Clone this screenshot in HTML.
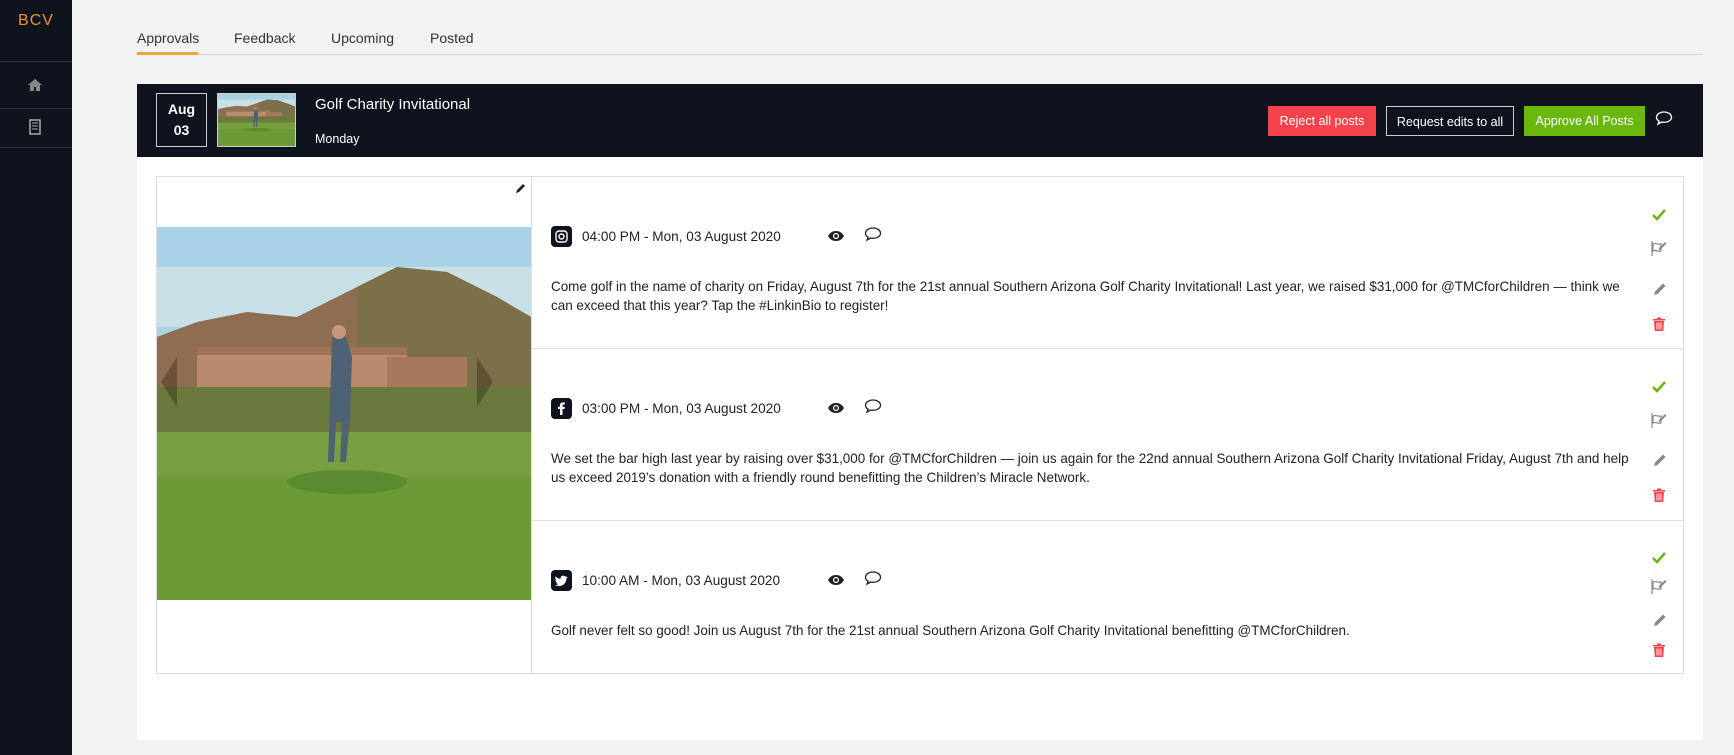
<!DOCTYPE html>
<html><head><meta charset="utf-8"><style>
*{margin:0;padding:0;box-sizing:border-box}
body{width:1734px;height:755px;background:#f2f2f2;font-family:"Liberation Sans",Arial,sans-serif;position:relative;overflow:hidden;color:#222}
.abs{position:absolute}
.side{left:0;top:0;width:72px;height:755px;background:#0f131d}
.side .logo{left:0;width:72px;top:12px;text-align:center;color:#e8932f;font-size:16px;letter-spacing:1px}
.side .ln{left:0;width:72px;height:1px;background:#2a2f3a}
.tab{top:30px;font-size:14px;color:#333}
.panel{left:137px;top:84px;width:1566px;height:656px;background:#fff}
.hdr{left:137px;top:84px;width:1566px;height:73px;background:#0f131d}
.btn{top:106px;height:30px;font-size:12.5px;color:#fff;text-align:center;line-height:30px}
.card{left:156px;top:176px;width:1528px;height:498px;border:1px solid #ddd;background:#fff}
.txt{font-size:13.45px;line-height:19px;color:#222;white-space:nowrap;left:551px}
.time{font-size:13.6px;left:582px;color:#222}
.si{left:551px;width:21px;height:21px;border-radius:4px;background:#0f131d}
.sep{left:531px;width:1153px;height:1px;background:#ddd}
</style></head><body>
<div class="abs side">
<div class="abs logo">BCV</div>
<div class="abs ln" style="top:61px"></div>
<div class="abs ln" style="top:108px"></div>
<div class="abs ln" style="top:147px"></div>
<svg class="abs" style="left:27px;top:78px" width="16" height="14" viewBox="0 0 16 14"><path d="M8 1L1 7h2v6h4V9h2v4h4V7h2z" fill="#888"/></svg>
<svg class="abs" style="left:29px;top:119px" width="12" height="16" viewBox="0 0 12 16"><rect x="1" y="1" width="10" height="14" fill="none" stroke="#aaa" stroke-width="1.5"/><path d="M3 4h6M3 7h6M3 10h6" stroke="#aaa"/></svg>
</div>
<div class="abs tab" style="left:137px">Approvals</div>
<div class="abs tab" style="left:234px">Feedback</div>
<div class="abs tab" style="left:331px">Upcoming</div>
<div class="abs tab" style="left:430px">Posted</div>
<div class="abs" style="left:137px;top:54px;width:1566px;height:1px;background:#d5d5d5"></div>
<div class="abs" style="left:137px;top:52px;width:61px;height:3px;background:#e8a93a"></div>
<div class="abs panel"></div>
<div class="abs hdr"></div>
<div class="abs" style="left:156px;top:93px;width:51px;height:54px;border:1px solid #ccc;color:#fff;font-weight:bold;font-size:14px;text-align:center;line-height:21px;padding-top:5px">Aug<br>03</div>
<svg class="abs" style="left:217px;top:93px;border:1px solid #ccc" width="79" height="54" viewBox="0 0 374 373" preserveAspectRatio="none"><use href="#photo"/></svg>
<div class="abs" style="left:315px;top:96px;color:#fff;font-size:15px">Golf Charity Invitational</div>
<div class="abs" style="left:315px;top:132px;color:#fff;font-size:12.5px">Monday</div>
<div class="abs btn" style="left:1268px;width:108px;background:#f5424b">Reject all posts</div>
<div class="abs btn" style="left:1386px;width:128px;border:1px solid #ccc">Request edits to all</div>
<div class="abs btn" style="left:1524px;width:121px;background:#6ab80e">Approve All Posts</div>
<svg class="abs" style="left:1655px;top:110px" width="18" height="16" viewBox="0 0 18 16"><path d="M9 2C4.6 2 1.5 4.5 1.5 7.3c0 1.6 1 3 2.6 3.9L3 14l3.6-2c.8.2 1.6.3 2.4.3 4.4 0 7.5-2.4 7.5-5.1S13.4 2 9 2z" fill="none" stroke="#fff" stroke-width="1.3"/></svg>
<div class="abs card"></div>
<div class="abs" style="left:531px;top:176px;width:1px;height:498px;background:#ddd"></div>
<svg class="abs" style="left:514px;top:182px" width="13" height="13" viewBox="0 0 13 13"><path d="M2 11l1-3 6-6 2 2-6 6z" fill="#222"/></svg>

<svg class="abs" style="left:157px;top:227px" width="374" height="373" viewBox="0 0 374 373">
<defs>
<g id="photo">
<rect width="374" height="373" fill="#a9d2e6"/>
<rect y="40" width="374" height="60" fill="#c9dfe6"/>
<path d="M0 110 L40 95 L90 85 L140 90 L200 60 L240 40 L290 45 L340 70 L374 90 L374 200 L0 200z" fill="#8f6d50"/>
<path d="M200 60 L240 40 L290 45 L340 70 L374 90 L374 160 L200 160z" fill="#7c7048"/>
<rect x="40" y="120" width="210" height="60" fill="#b98a6c"/>
<rect x="40" y="120" width="210" height="8" fill="#9e7458"/>
<rect x="230" y="130" width="80" height="50" fill="#a8785a"/>
<rect x="0" y="160" width="374" height="50" fill="#6b7a3c"/>
<rect x="0" y="205" width="374" height="168" fill="#76a040"/>
<rect x="0" y="250" width="374" height="123" fill="#6c9a36"/>
<ellipse cx="190" cy="255" rx="60" ry="12" fill="#5c8a2e"/>
<path d="M175 110 l14 0 6 20 -2 60 -4 45 -6 0 2-40 -6 0 -2 40 -6 0 2-60z" fill="#4e6275"/>
<circle cx="182" cy="105" r="7" fill="#c79777"/>
</g>
</defs>
<use href="#photo"/>
<path d="M20 130 l-16 25 16 25z M320 130 l16 25 -16 25z" fill="rgba(0,0,0,0.25)"/>
</svg>

<div class="abs sep" style="top:348px"></div>
<div class="abs sep" style="top:520px"></div>

<div class="abs si" style="top:226px"><svg width="21" height="21" viewBox="0 0 21 21"><rect x="5" y="5" width="11" height="11" rx="3" fill="none" stroke="#fff" stroke-width="1.4"/><circle cx="10.5" cy="10.5" r="2.5" fill="none" stroke="#fff" stroke-width="1.4"/></svg></div>
<div class="abs time" style="top:229px">04:00 PM - Mon, 03 August 2020</div>
<div class="abs txt" style="top:277px">Come golf in the name of charity on Friday, August 7th for the 21st annual Southern Arizona Golf Charity Invitational! Last year, we raised $31,000 for @TMCforChildren — think we<br>can exceed that this year? Tap the #LinkinBio to register!</div>

<div class="abs si" style="top:398px"><svg width="21" height="21" viewBox="0 0 21 21"><path d="M11.5 17v-6h2l.3-2.2h-2.3V7.5c0-.6.2-1 1-1h1.3V4.5c-.3 0-1-.1-1.8-.1-1.9 0-3 1.1-3 3.1v1.3h-2V11h2v6z" fill="#fff"/></svg></div>
<div class="abs time" style="top:401px">03:00 PM - Mon, 03 August 2020</div>
<div class="abs txt" style="top:449px">We set the bar high last year by raising over $31,000 for @TMCforChildren — join us again for the 22nd annual Southern Arizona Golf Charity Invitational Friday, August 7th and help<br>us exceed 2019’s donation with a friendly round benefitting the Children’s Miracle Network.</div>

<div class="abs si" style="top:570px"><svg width="21" height="21" viewBox="0 0 21 21"><path d="M16 7c-.5.2-1 .4-1.5.4.6-.3 1-.9 1.2-1.5-.5.3-1.1.5-1.7.6a2.6 2.6 0 0 0-4.4 2.4C7.5 8.8 5.8 7.8 4.6 6.4c-.7 1.2-.3 2.7.8 3.5-.4 0-.8-.1-1.2-.3 0 1.3.9 2.4 2.1 2.6-.4.1-.8.1-1.2 0 .3 1.1 1.3 1.8 2.4 1.8A5.3 5.3 0 0 1 4 15c1.2.7 2.5 1.1 4 1.1 4.8 0 7.5-4 7.4-7.6.5-.4.9-.8 1.2-1.3z" fill="#fff"/></svg></div>
<div class="abs time" style="top:573px">10:00 AM - Mon, 03 August 2020</div>
<div class="abs txt" style="top:621px">Golf never felt so good! Join us August 7th for the 21st annual Southern Arizona Golf Charity Invitational benefitting @TMCforChildren.</div>

<svg width="0" height="0" style="position:absolute"><defs>
<g id="eye"><path d="M1 7C3 3.5 5.5 2 9 2s6 1.5 8 5c-2 3.5-4.5 5-8 5S3 10.5 1 7z" fill="#222"/><circle cx="9" cy="7" r="3" fill="#fff"/><circle cx="9" cy="7" r="1.8" fill="#222"/></g>
<g id="chat"><path d="M9 2C4.6 2 1.5 4.5 1.5 7.3c0 1.6 1 3 2.6 3.9L3 14l3.6-2c.8.2 1.6.3 2.4.3 4.4 0 7.5-2.4 7.5-5.1S13.4 2 9 2z" fill="none" stroke="#222" stroke-width="1.3"/></g>
<g id="chk"><path d="M2 8l4 4 8-9" fill="none" stroke="#6ab80e" stroke-width="2.6"/></g>
<g id="flag"><path d="M2 2v15" stroke="#888" stroke-width="1.2"/><path d="M3 5c3-1.5 5 1 8 0v7c-3 1-5-1.5-8 0z" fill="none" stroke="#888" stroke-width="1.2"/><path d="M9 9l6-6 1.5 1.5-6 6-2 .5z" fill="#888"/></g>
<g id="pen"><path d="M2 14l1-3.5 8-8 2.5 2.5-8 8z" fill="#888"/></g>
<g id="trash"><path d="M2 3h12v1.5H2zM6 1.5h4V3H6zM3 5h10l-.8 10H3.8z" fill="#f5424b"/><path d="M6 6.5v7M8 6.5v7M10 6.5v7" stroke="#fff" stroke-width=".9"/></g>
</defs></svg>
<svg class="abs" style="left:827px;top:229px" width="18" height="14"><use href="#eye"/></svg>
<svg class="abs" style="left:864px;top:226px" width="18" height="16"><use href="#chat"/></svg>
<svg class="abs" style="left:827px;top:401px" width="18" height="14"><use href="#eye"/></svg>
<svg class="abs" style="left:864px;top:398px" width="18" height="16"><use href="#chat"/></svg>
<svg class="abs" style="left:827px;top:573px" width="18" height="14"><use href="#eye"/></svg>
<svg class="abs" style="left:864px;top:570px" width="18" height="16"><use href="#chat"/></svg>

<svg class="abs" style="left:1651px;top:207px" width="16" height="16"><use href="#chk"/></svg>
<svg class="abs" style="left:1650px;top:239px" width="18" height="18"><use href="#flag"/></svg>
<svg class="abs" style="left:1652px;top:281px" width="16" height="16"><use href="#pen"/></svg>
<svg class="abs" style="left:1651px;top:316px" width="16" height="16"><use href="#trash"/></svg>

<svg class="abs" style="left:1651px;top:379px" width="16" height="16"><use href="#chk"/></svg>
<svg class="abs" style="left:1650px;top:411px" width="18" height="18"><use href="#flag"/></svg>
<svg class="abs" style="left:1652px;top:452px" width="16" height="16"><use href="#pen"/></svg>
<svg class="abs" style="left:1651px;top:487px" width="16" height="16"><use href="#trash"/></svg>

<svg class="abs" style="left:1651px;top:550px" width="16" height="16"><use href="#chk"/></svg>
<svg class="abs" style="left:1650px;top:577px" width="18" height="18"><use href="#flag"/></svg>
<svg class="abs" style="left:1652px;top:612px" width="16" height="16"><use href="#pen"/></svg>
<svg class="abs" style="left:1651px;top:642px" width="16" height="16"><use href="#trash"/></svg>
</body></html>
